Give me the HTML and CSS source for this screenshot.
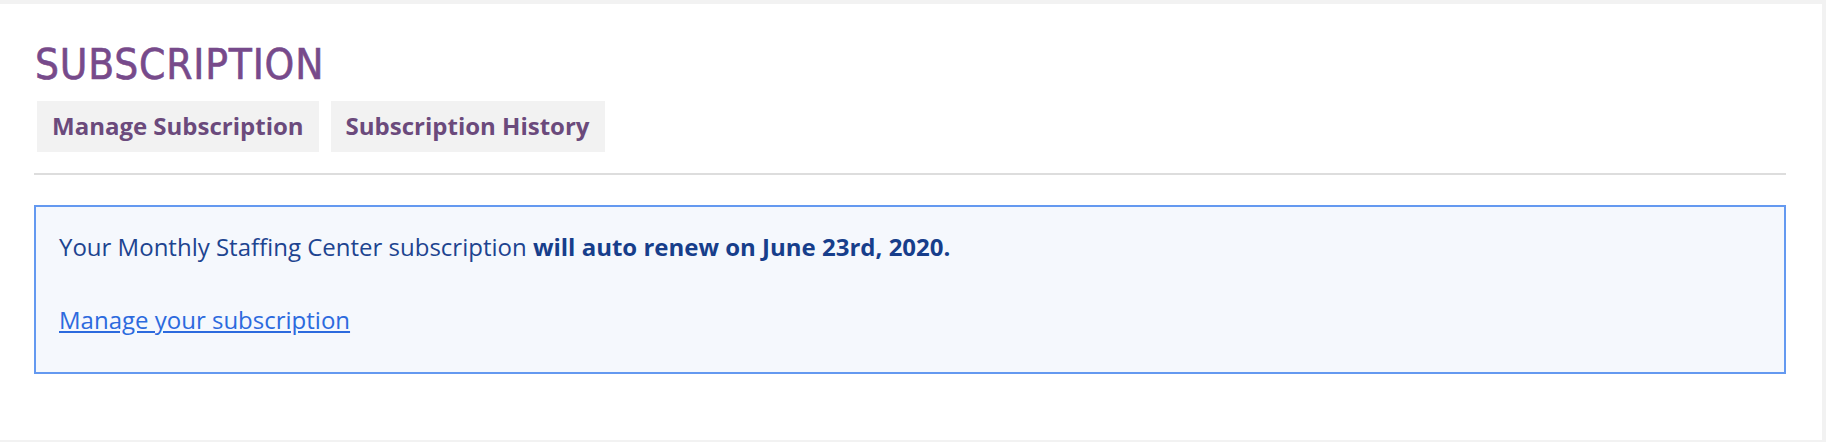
FILE: index.html
```html
<!DOCTYPE html>
<html lang="en">
<head>
    <meta charset="UTF-8">
    <meta name="viewport" content="width=device-width, initial-scale=1.0">
    <title>Subscription</title>
    <link rel="stylesheet" href="styles.css">
</head>
<body>
    <div class="page-panel">
        <h1 class="page-title">SUBSCRIPTION</h1>

        <!-- Tabs -->
        <div class="tab-row">
            <a href="#" class="tab-item">Manage Subscription</a>
            <a href="#" class="tab-item">Subscription History</a>
        </div>

        <hr class="divider">

        <!-- Renewal notice -->
        <div class="notice-box">
            <p class="notice-text">
                Your Monthly Staffing Center subscription <strong>will auto renew on June 23rd, 2020.</strong><br><br>
                <a href="#" class="notice-link">Manage your subscription</a>
            </p>
        </div>
    </div>
</body>
</html>
```

FILE: styles.css
```css
body {
    margin: 0;
    background-color: #f2f2f2;
    font-family: "Open Sans", Arial, sans-serif;
}
.page-panel {
    background: #ffffff;
    margin: 4px 4px 0 0;
    height: 436px;
    box-sizing: border-box;
    padding: 41px 36px 0 34px;
}
.page-title {
    margin: 0 0 0 1px;
    font-family: "DejaVu Sans Condensed", "DejaVu Sans", sans-serif;
    font-weight: normal;
    font-size: 42px;
    line-height: 40px;
    letter-spacing: 0.8px;
    color: #774a8b;
    -webkit-text-stroke: 0.6px #774a8b;
}
.tab-row {
    display: flex;
    gap: 12px;
    margin-top: 16px;
    padding-left: 3px;
}
.tab-item {
    display: block;
    background-color: #f2f2f2;
    color: #6b4a7c;
    font-weight: bold;
    font-size: 24px;
    line-height: 33px;
    padding: 8px 15px 10px;
    text-decoration: none;
}
.divider {
    margin: 21px 0 0;
    border: none;
    border-top: 2px solid #dddddd;
    height: 0;
}
.notice-box {
    margin-top: 30px;
    border: 2px solid #6499f0;
    background-color: #f5f8fd;
    padding: 22px 23px 34px;
    height: 169px;
    box-sizing: border-box;
}
.notice-text {
    margin: 0;
    font-size: 24px;
    line-height: 36.5px;
    color: #1d4490;
}
.notice-text strong {
    color: #173e8b;
}
.notice-link {
    color: #2c6ade;
}
```
